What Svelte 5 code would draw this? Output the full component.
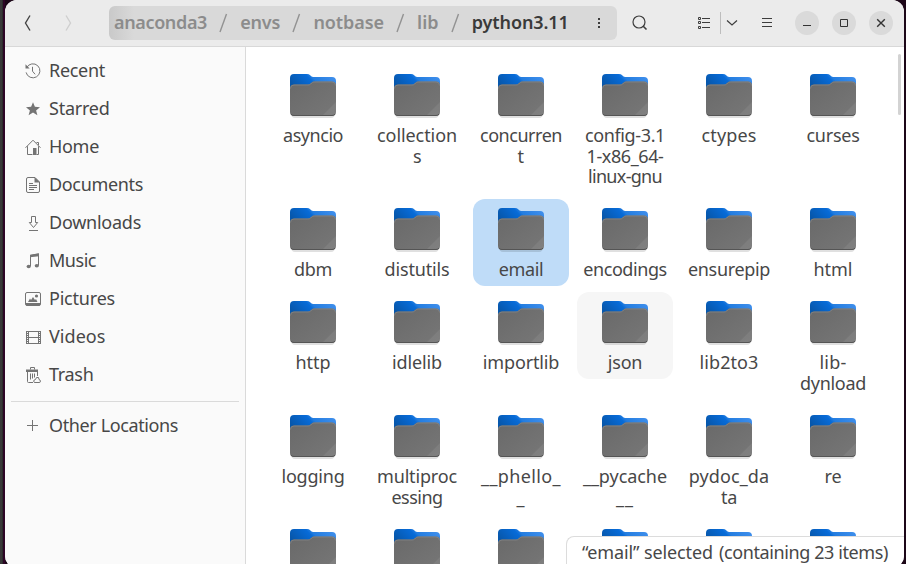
<script>
  // Spreads letters so that a label takes exactly the given width.
  function fit(node, width) {
    const natural = node.getBoundingClientRect().width;
    node.style.letterSpacing = `${(width - natural) / node.textContent.length}px`;
  }

  const crumbs = [
    ['anaconda3', 93],
    ['envs', 40],
    ['notbase', 70.5],
    ['lib', 21.5],
    ['python3.11', 97]
  ];

  const places = [
    ['Recent', 56],
    ['Starred', 60.5],
    ['Home', 50],
    ['Documents', 94],
    ['Downloads', 92],
    ['Music', 47],
    ['Pictures', 66],
    ['Videos', 56.5],
    ['Trash', 44.5]
  ];

  const folders = [
    [['asyncio', 60]],
    [['collection', 80], ['s', 8]],
    [['concurren', 82], ['t', 7]],
    [['config-3.1', 80], ['1-x86_64-', 77], ['linux-gnu', 74]],
    [['ctypes', 55]],
    [['curses', 53]],
    [['dbm', 38]],
    [['distutils', 65]],
    [['email', 44.5]],
    [['encodings', 83.5]],
    [['ensurepip', 82]],
    [['html', 39]],
    [['http', 35]],
    [['idlelib', 50]],
    [['importlib', 76.5]],
    [['json', 34.5]],
    [['lib2to3', 59]],
    [['lib-', 27], ['dynload', 66]],
    [['logging', 63]],
    [['multiproc', 80], ['essing', 51]],
    [['__phello_', 80], ['_', 9]],
    [['__pycache', 84], ['__', 18]],
    [['pydoc_da', 80.5], ['ta', 16]],
    [['re', 17]],
    [], [], [], [], [], []
  ];
</script>

{#snippet placeIcon(name)}
  <svg class="place-icon" width="16" height="16" viewBox="0 0 16 16" fill="none" stroke="#747474">
    {#if name === 'Recent'}
      <path d="M1.7 4.6A7 7 0 1 1 1.1 9.4" />
      <path d="M.5 1.3v4.2h4.2z" fill="#747474" stroke="none" />
      <path d="M7.5 3.8v4.4l2.6 3.1" />
    {:else if name === 'Starred'}
      <path d="M8 1.200l1.900 4.600 5.100.4-3.900 3.200 1.300 4.900L8 11.600l-4.400 2.700 1.300-4.900L1 6.200l5.100-.4z" fill="#747474" stroke="none" />
    {:else if name === 'Home'}
      <path d="M.5 8.8L8 1.2l7.5 7.6M2.5 7.2v8.3h5M13.5 7.2v8.3h-2M13.5 6V3.5h-2" />
      <path d="M8 9h3.5v7H8z" fill="#747474" stroke="none" />
    {:else if name === 'Documents'}
      <path d="M3 .5h7L14.5 5v9a1.5 1.5 0 0 1-1.500 1.500H3A1.500 1.500 0 0 1 1.500 14V2A1.500 1.500 0 0 1 3 .5z" />
      <path d="M9.500 0L15 5.500H9.500z" fill="#747474" stroke="none" />
      <path d="M4 6.500h4M4 8.500h8M4 10.500h8M4 12.500h5" />
    {:else if name === 'Downloads'}
      <path d="M6.500 1.500h4v6h2.200L8.500 12.500 4.300 7.500h2.200zM4 15.500h9" />
    {:else if name === 'Music'}
      <path d="M5.500 13V2.500l8-1.500v11.500" />
      <path d="M5 1.800L14 .3v3L5 4.300z" fill="#747474" stroke="none" />
      <ellipse cx="3.700" cy="13.500" rx="2.100" ry="1.800" fill="#747474" stroke="none" />
      <ellipse cx="11.800" cy="12.800" rx="2.100" ry="1.800" fill="#747474" stroke="none" />
    {:else if name === 'Pictures'}
      <rect x=".5" y="1.500" width="15" height="13" rx="1.500" />
      <path d="M1 12h14v2.500H1zM3 11l2-3.500L6 9l2-3 2 3 1-1 1.500 3z" fill="#747474" stroke="none" />
      <circle cx="11.500" cy="5" r="1.600" fill="#747474" stroke="none" />
    {:else if name === 'Videos'}
      <path d="M3.500 2v13M13.500 2v13M3.500 2.500h10M3.500 8.500h10M3.500 14.500h10" />
      <path d="M1.500 2v13M15.500 2v13" />
      <path d="M2.500 2v13M14.500 2v13" stroke-dasharray="1 1" />
    {:else if name === 'Trash'}
      <path d="M1 2.500h12v2.500H1z" fill="#747474" stroke="none" />
      <path d="M5.500 2.500v-2h4v2M2.500 5v9.500q0 1 1 1H8M5.500 6.500v6M7.500 6.500v5M9.500 6.500v4M12.500 5v4" />
      <path d="M10.500 12.500l1-2h2l.5 2q1.500.5 1.500 1.700 0 1.300-1.500 1.300h-4q-1.300 0-1.300-1.300 0-1.500 1.800-1.700z" fill="#fafafa" />
    {:else}
      <path d="M7.500 2v11M2 7.500h11" />
    {/if}
  </svg>
{/snippet}

<div class="desktop">
  <div class="window">
    <header>
      <svg class="back" width="64" height="20" viewBox="0 0 64 20" fill="none" stroke-width="1.400">
        <path d="M12 2.500L7.500 10l4.500 7.500" stroke="#444" />
        <path d="M48 2.500l4.500 7.500-4.500 7.500" stroke="#cfcfcf" />
      </svg>
      <nav class="path">
        {#each crumbs as [name, width], i}
          {#if i > 0}
            <svg class="slash" width="9" height="20" viewBox="0 0 9 20"><path d="M1 19L7.500 1" stroke="#929292" stroke-width="1.400" /></svg>
          {/if}
          <span class="crumb" class:current={i === 4} style:width="{width}px"><span use:fit={width}>{name}</span></span>
        {/each}
        <svg class="dots" width="4" height="12" viewBox="0 0 4 12" fill="#3d3d3d"><path d="M1 1h2v2H1zM1 5h2v2H1zM1 9h2v2H1z" /></svg>
      </nav>
      <svg class="search" width="16" height="16" viewBox="0 0 16 16" fill="none" stroke="#3d3d3d" stroke-width="1.200">
        <circle cx="7" cy="7" r="6" /><path d="M11 11l3.500 3.500" stroke-width="1.600" />
      </svg>
      <div class="view">
        <svg width="14" height="14" viewBox="0 0 14 14" fill="none" stroke="#3d3d3d">
          <path d="M1.500 1.500h2v2h-2zM1.500 5.500h2v2h-2zM1.500 10.500h2v2h-2zM5 2.500h8M5 6.500h8M5 11.500h8" />
        </svg>
        <i></i>
        <svg width="12" height="8" viewBox="0 0 12 8" fill="none" stroke="#3d3d3d" stroke-width="1.200"><path d="M1 1.500l5 4.500 5-4.500" /></svg>
      </div>
      <svg class="menu" width="10" height="12" viewBox="0 0 10 12" stroke="#3d3d3d"><path d="M0 1.500h10M0 5.500h10M0 9.500h10" /></svg>
      <div class="controls">
        <svg width="24" height="24" viewBox="0 0 24 24" fill="none" stroke="#333"><circle cx="12" cy="12" r="12" /><path d="M8 14.500h8" /></svg>
        <svg width="24" height="24" viewBox="0 0 24 24" fill="none" stroke="#333"><circle cx="12" cy="12" r="12" /><path d="M8.500 8.500h7v7h-7z" /></svg>
        <svg width="24" height="24" viewBox="0 0 24 24" fill="none" stroke="#333"><circle cx="12" cy="12" r="12" /><path d="M8.200 8.200l7.600 7.600M15.800 8.200l-7.600 7.600" stroke-width="1.400" /></svg>
      </div>
    </header>
    <div class="body">
      <aside>
        {#each places as [name, width]}
          <div class="place">{@render placeIcon(name)}<span use:fit={width}>{name}</span></div>
        {/each}
        <hr />
        <div class="place">{@render placeIcon('Other')}<span use:fit={129}>Other Locations</span></div>
      </aside>
      <main>
        <div class="grid">
          {#each folders as lines}
            <div class="tile" class:selected={lines[0]?.[0] === 'email'} class:hover={lines[0]?.[0] === 'json'}>
              <svg class="folder" width="50" height="46" viewBox="0 0 50 46">
                <defs>
                  <linearGradient id="tab" x1="0" y1=".4" x2="1" y2="0"><stop offset="0" stop-color="#0757ab" /><stop offset=".42" stop-color="#076bd8" /><stop offset=".5" stop-color="#237de0" /><stop offset="1" stop-color="#4592ee" /></linearGradient>
                  <linearGradient id="front" x1="0" y1="0" x2="1" y2="1"><stop offset="0" stop-color="#696969" /><stop offset="1" stop-color="#777" /></linearGradient>
                </defs>
                <path d="M3 40h44q0 5-4 5H7q-4 0-4-5z" fill="#000" opacity=".12" />
                <path d="M2 20V5q0-4 4-4h13q2 0 3.200 1.200l1 1q1 .8 2 .8H44q4 0 4 4v12z" fill="url(#tab)" />
                <path d="M2 15.500q0-4 4-4h14q1.500 0 2.500-1l1-1q1-1 2.500-1h18q4 0 4 4V39q0 4-4 4H6q-4 0-4-4z" fill="url(#front)" />
                <path d="M2.500 15.500q0-3.500 3.500-3.500h14q1.700 0 2.700-1l1-1q1-1 2.300-1h18q3.500 0 3.500 3.500" fill="none" stroke="#858585" stroke-width=".8" />
                <path d="M48 29v10q0 4-4 4H34z" fill="#fff" opacity=".07" />
                <path d="M3 41q1 1.500 3 1.500h38q2 0 3-1.500" fill="none" stroke="#555" stroke-width="1" />
              </svg>
              {#each lines as [text, width]}
                <div class="line"><span use:fit={width}>{text}</span></div>
              {/each}
            </div>
          {/each}
        </div>
        <div class="scrollbar"></div>
        <div class="status"><span use:fit={131}>“email” selected</span><span use:fit={169}>(containing 23 items)</span></div>
      </main>
    </div>
  </div>
</div>

<style>
  .desktop {
    box-sizing: border-box;
    width: 906px;
    height: 564px;
    padding: 0 2px 0 5px;
    overflow: hidden;
    background: linear-gradient(90deg, #393939 0 2px, #202020 3px, #2e0526 3px 5px, #1c0718 5px);
    font: 18px/21px "Noto Sans", "Open Sans", sans-serif;
    color: #474747;
  }
  .window {
    display: flex;
    flex-direction: column;
    width: 899px;
    height: 568px;
    overflow: hidden;
    border-radius: 12px;
    background: #fff;
  }
  header {
    box-sizing: border-box;
    flex: none;
    display: flex;
    align-items: center;
    height: 47px;
    padding: 0 11px 1px 13px;
    background: #ebebeb;
    border-bottom: 1px solid #d8d8d8;
  }
  .back { margin-right: 27px; }
  .path {
    box-sizing: border-box;
    display: flex;
    flex: none;
    align-items: center;
    width: 508px;
    height: 34px;
    padding-left: 5px;
    border-radius: 6px;
    background: linear-gradient(90deg, #c9c9c9 0, #d9d9d9 25px);
    font-weight: 600;
    color: #8c8c8c;
  }
  .crumb { flex: none; padding-bottom: 2px; line-height: 22px; white-space: nowrap; }
  .current { color: #3a3a3a; }
  .slash { flex: none; margin: 0 12.100px; }
  .dots { margin-left: 28px; }
  .search { margin-left: 15px; }
  .view {
    display: flex;
    align-items: center;
    margin-left: 49px;
  }
  .view i { width: 1px; height: 22px; margin: 0 5px 0 9px; background: #bdbdbd; }
  .menu { margin: 1px 0 0 24px; }
  .controls { display: flex; gap: 13px; margin-left: auto; }
  .controls circle { fill: #dadada; stroke: none; }
  .body { display: flex; flex: 1; min-height: 0; }
  aside {
    box-sizing: border-box;
    width: 241px;
    padding-top: 5px;
    border-right: 1px solid #dadada;
    background: #fafafa;
  }
  .place {
    display: flex;
    align-items: center;
    gap: 8px;
    height: 38px;
    padding-left: 20px;
    white-space: nowrap;
  }
  .place span { padding-bottom: 1px; }
  hr { height: 1px; margin: 7px 6px 5px; border: 0; background: #dadada; }
  main { position: relative; flex: 1; overflow: hidden; }
  .grid {
    display: grid;
    grid-template-columns: repeat(6, 96px);
    column-gap: 8px;
    row-gap: 6px;
    align-items: start;
    padding: 18px 0 0 19px;
  }
  .tile {
    box-sizing: border-box;
    display: flex;
    flex-direction: column;
    align-items: center;
    min-height: 87px;
    padding: 8px 0 6px;
    border-radius: 12px;
  }
  .selected { background: #bfdcf8; }
  .hover { background: #f6f6f6; }
  .folder { flex: none; margin-bottom: 6px; }
  .line { height: 21px; line-height: 21px; white-space: nowrap; }
  .line + .line + .line { height: 20px; line-height: 19px; }
  .scrollbar {
    position: absolute;
    top: 7px;
    right: 3px;
    width: 3px;
    height: 61px;
    border-radius: 2px;
    background: #d3d3d3;
  }
  .status {
    position: absolute;
    right: 0;
    bottom: 4px;
    box-sizing: border-box;
    display: flex;
    gap: 6px;
    width: 338px;
    height: 28px;
    padding: 5px 0 0 15px;
    border: 1px solid #dcdcdc;
    border-width: 1px 0 0 1px;
    border-radius: 8px 0 0 0;
    background: #fff;
    white-space: nowrap;
  }
</style>
